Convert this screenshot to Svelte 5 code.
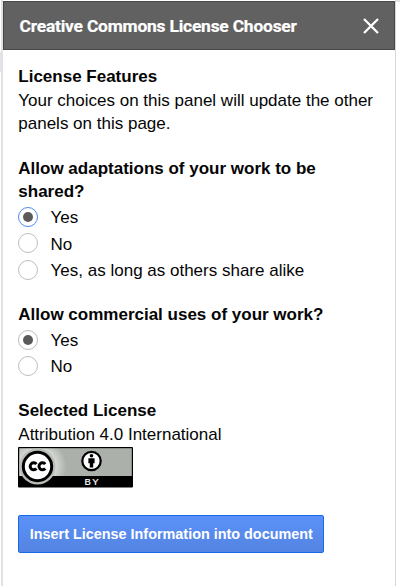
<script>
  const questions = [
    {
      id: 'adapt',
      title: 'Allow adaptations of your work to be shared?',
      options: ['Yes', 'No', 'Yes, as long as others share alike'],
      focused: true
    },
    {
      id: 'commercial',
      title: 'Allow commercial uses of your work?',
      options: ['Yes', 'No'],
      focused: false
    }
  ];
  let picked = $state([0, 0]);
</script>

<div class="page">
  <div class="gutter"><span></span></div>
  <aside class="sidebar">
    <header>
      <h1>Creative Commons License Chooser</h1>
      <button class="close" aria-label="Close">
        <svg width="16" height="16" viewBox="0 0 16 16"><path d="M1 1L15 15M15 1L1 15" stroke="#fff" stroke-width="2.3" /></svg>
      </button>
    </header>
    <main>
      <section class="intro">
        <h2>License Features</h2>
        <p>Your choices on this panel will update the other panels on this page.</p>
      </section>
      {#each questions as q, i}
        <section class="question">
          <h2>{q.title}</h2>
          {#each q.options as option, j}
            <label>
              <input type="radio" name={q.id} class:focused={q.focused && picked[i] === j} checked={picked[i] === j} onchange={() => (picked[i] = j)} />
              <span>{option}</span>
            </label>
          {/each}
        </section>
      {/each}
      <section class="selected">
        <h2>Selected License</h2>
        <p>Attribution 4.0 International</p>
        <svg class="badge" width="115" height="41" viewBox="0 0 115 41">
          <defs>
            <clipPath id="frame"><rect x="1" y="1" width="113" height="38.5" /></clipPath>
            <radialGradient id="glow" gradientUnits="userSpaceOnUse" cx="19.5" cy="19.5" r="29">
              <stop offset="0.5" stop-color="#e2e4e1" />
              <stop offset="1" stop-color="#abb1aa" />
            </radialGradient>
          </defs>
          <rect width="115" height="40.5" rx="1" fill="#000" />
          <rect x="1.2" y="1.2" width="112.6" height="27.8" fill="url(#glow)" />
          <g clip-path="url(#frame)">
            <circle cx="19.5" cy="19.5" r="18" fill="#b8bdb6" />
          </g>
          <circle cx="19.5" cy="19.5" r="14.2" fill="#fff" stroke="#000" stroke-width="3" />
          <g fill="none" stroke="#000" stroke-width="3">
            <path d="M18.4 17.1A3.5 3.5 0 1 0 18.4 21.5" />
            <path d="M27.2 17.1A3.5 3.5 0 1 0 27.2 21.5" />
          </g>
          <circle cx="73.5" cy="14" r="9.2" fill="#fff" stroke="#000" stroke-width="2.2" />
          <circle cx="73.5" cy="8.8" r="1.8" />
          <path d="M70.4 11.2H76.6V16.3H75.2V20.5H71.8V16.3H70.4Z" />
          <text x="66.5" y="37.7" textLength="14">BY</text>
        </svg>
      </section>
      <button class="insert">Insert License Information into document</button>
    </main>
  </aside>
  <div class="edge"></div>
</div>

<style>
  :global(body) { background: #fff; }
  .page {
    display: flex;
    width: 400px;
    height: 586px;
    overflow: hidden;
    font: 17px/23.7px "Liberation Sans", Arial, sans-serif;
    color: #050505;
  }
  .gutter {
    box-sizing: border-box;
    width: 3px;
    padding-top: 52px;
    border-right: 2px solid #e1e1e1;
  }
  .gutter span { display: block; height: 20px; width: 3px; background: #e2e3e9; }
  .sidebar {
    box-sizing: border-box;
    width: 393px;
    padding-top: 1px;
    border-right: 1px solid #d8d8d8;
  }
  .edge { width: 4px; height: 2px; background: #e4e4e4; }
  header {
    box-sizing: border-box;
    display: flex;
    align-items: center;
    justify-content: space-between;
    height: 49px;
    padding: 0 15px 0 15.5px;
    background: #616161;
    border: 1px solid #484848;
  }
  h1 {
    margin: 0;
    font: 700 17.4px/24px Roboto, sans-serif;
    letter-spacing: -0.2px;
    color: #fff;
    -webkit-text-stroke: 0.2px #fff;
    white-space: nowrap;
  }
  .close { display: flex; padding: 0; border: 0; background: none; }
  main { padding: 15px 15px 0 15.3px; }
  h2, p { margin: 0; font-size: inherit; }
  h2 { font-weight: 700; }
  section { margin-bottom: 20.6px; }
  .question { margin-bottom: 20.3px; }
  label { display: flex; height: 26.2px; align-items: center; }
  label span { padding-top: 2px; }
  input {
    box-sizing: border-box;
    display: grid;
    place-content: center;
    appearance: none;
    width: 20px;
    height: 20px;
    margin: 0 12.3px 0 0;
    border: 1px solid #bdbdbd;
    border-radius: 50%;
    background: #fff;
  }
  input.focused { border-color: #4d8bf5; }
  input:checked::before {
    content: '';
    width: 10px;
    height: 10px;
    border-radius: 50%;
    background: #5b5b5b;
  }
  .badge { display: block; }
  .badge text { font: 400 9.5px "Liberation Sans", sans-serif; fill: #fff; stroke: #fff; stroke-width: 0.2px; }
  .insert {
    height: 38px;
    padding: 0 10.5px;
    margin-top: 6.8px;
    border: 1px solid #1669e8;
    border-radius: 2px;
    background: linear-gradient(#5b91f8, #5484e2);
    color: #fff;
    font: 700 14.4px/35px "Liberation Sans", Arial, sans-serif;
    white-space: nowrap;
  }
</style>
